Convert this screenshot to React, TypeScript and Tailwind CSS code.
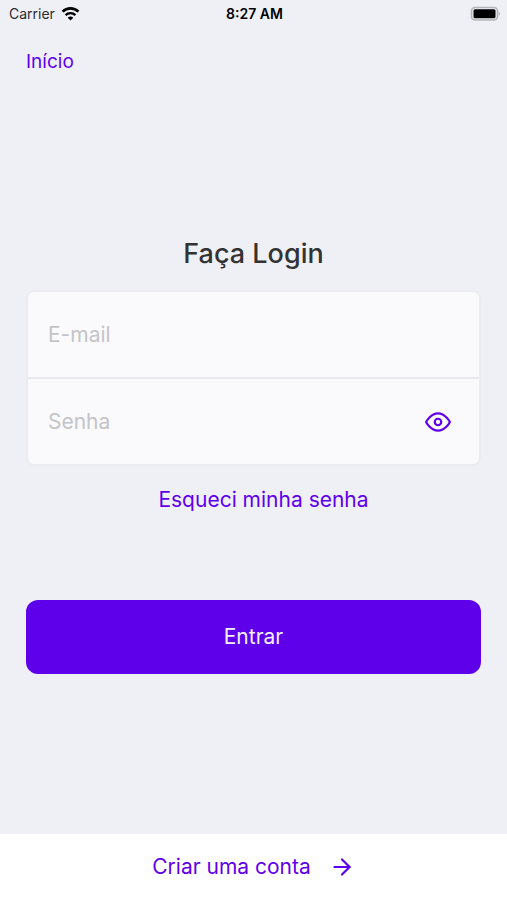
import { FiArrowRight, FiEye } from "react-icons/fi";

function StatusBar() {
  return (
    <header className="grid grid-cols-3 items-center h-7 pl-[9px] pr-[7px] text-sm text-black">
      <div className="flex items-center gap-[6px]">
        <span className="text-[#2b2b2f]">Carrier</span>
        <svg className="w-[19px] h-[14px]" viewBox="0 0 18 14" fill="none" aria-hidden="true">
          <path d="M1.1 4.6a11.4 11.4 0 0 1 15.8 0" stroke="#000" strokeWidth="2.6" />
          <path d="M4.1 8.1a7 7 0 0 1 9.8 0" stroke="#000" strokeWidth="2.4" />
          <path d="M9 13.6 6.2 10.8a4 4 0 0 1 5.6 0Z" fill="#000" />
        </svg>
      </div>
      <span className="text-center font-semibold">8:27 AM</span>
      <svg className="justify-self-end w-[30px] h-4" viewBox="0 0 30 16" fill="none" aria-hidden="true">
        <rect x="1.5" y="1.5" width="26" height="12.5" rx="3.5" stroke="#b4b4b8" strokeWidth="1.6" />
        <rect x="3.5" y="3.2" width="22" height="9" rx="1.5" fill="#000" />
        <path d="M28.6 5.6c1.6.8 1.6 3.6 0 4.4Z" fill="#b4b4b8" />
      </svg>
    </header>
  );
}

export default function App() {
  return (
    <div className="flex flex-col min-h-screen bg-[#eff0f6] font-['Inter',sans-serif] text-[#5f00eb]">
      <StatusBar />

      <nav className="flex px-[26px] pt-[22px]">
        <a href="#inicio" className="text-[19px] leading-6">
          Início
        </a>
      </nav>

      <main className="flex-1 flex flex-col justify-center px-[26px]">
        <form className="flex flex-col">
          <h1 className="mb-4 text-center text-[27px] leading-10 font-medium text-[#333333]">
            Faça Login
          </h1>

          {/* Fields */}
          <div className="rounded-lg border-2 border-[#ebebf1] bg-[#fafafd] overflow-hidden">
            <input
              type="email"
              aria-label="E-mail"
              placeholder="E-mail"
              className="block w-full h-[85px] px-5 text-[21px] text-[#333333] placeholder:text-[#c4c4c7]"
            />
            <div className="flex items-center border-t-2 border-[#e8e8ef] pr-7">
              <input
                type="password"
                aria-label="Senha"
                placeholder="Senha"
                className="flex-1 min-w-0 h-[85px] px-5 text-[21px] text-[#333333] placeholder:text-[#c4c4c7]"
              />
              <button type="button" aria-label="Mostrar senha">
                <FiEye size={26} />
              </button>
            </div>
          </div>

          <a href="#senha" className="ml-5 mt-[18px] self-center text-[21px] leading-8">
            Esqueci minha senha
          </a>

          <button type="submit" className="mt-[84px] h-[74px] rounded-xl bg-[#5f00eb] text-[21px] text-[#f4eefd]">
            Entrar
          </button>
        </form>
      </main>

      <footer className="bg-white">
        <a href="#criar" className="flex items-center justify-center gap-[18px] h-[66px] text-[21px]">
          Criar uma conta
          <FiArrowRight size={26} aria-hidden="true" />
        </a>
      </footer>
    </div>
  );
}
